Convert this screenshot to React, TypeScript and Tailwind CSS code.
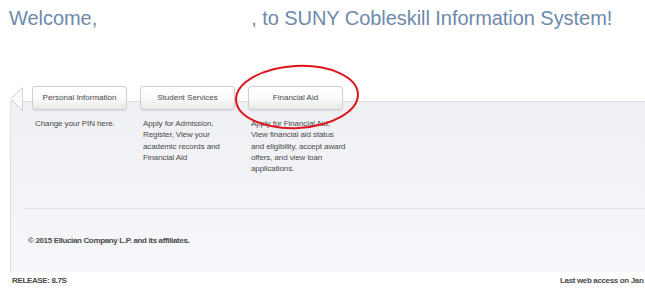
const tabs = [
  { label: "Personal Information", desc: ["Change your PIN here."] },
  {
    label: "Student Services",
    desc: ["Apply for Admission,", "Register, View your", "academic records and", "Financial Aid"],
  },
  {
    label: "Financial Aid",
    desc: [
      "Apply for Financial Aid,",
      "View financial aid status",
      "and eligibility, accept award",
      "offers, and view loan",
      "applications.",
    ],
  },
];

export default function App() {
  return (
    <div className="relative w-[645px] h-[295px] overflow-hidden bg-white font-['Liberation_Sans',Arial,sans-serif]">
      {/* header */}
      <div className="h-[85px] pl-[9px] pt-[6px]">
        <h1 className="text-[20px] leading-[24px] text-[#6d89ab] whitespace-nowrap tracking-[-0.05px]">
          Welcome,<span className="inline-block w-[154px]" />, to SUNY Cobleskill Information System!
        </h1>
      </div>

      {/* spacer so panel top lands at 101 */}
      <div className="h-[16px]" />

      {/* main panel */}
      <div className="ml-[10px] h-[171px] border-l border-t border-[#dcdee4] bg-gradient-to-b from-[#eff0f4] to-[#f6f7fa]">
        <div className="-mt-[16px] h-[122px] flex items-start">
          <svg width="13" height="24" viewBox="0 0 13 24" className="-ml-[1px] mt-[1px] shrink-0">
            <path d="M12.5 0.5 L0.5 12 L12.5 23.5 Z" fill="#fafafa" stroke="#cfd1d6" strokeWidth="1" />
          </svg>
          <div className="ml-[9px] flex">
            {tabs.map((t) => (
              <div key={t.label} className="w-[108px] shrink-0">
                <div className="w-[95px] h-[24px] rounded-[3px] border border-[#cfcfcf] bg-gradient-to-b from-white via-[#fbfbfb] to-[#e9e9e9] shadow-[0_1px_1px_rgba(0,0,0,0.08)] flex items-center justify-center text-[8px] text-[#484848]">
                  {t.label}
                </div>
                <div className="mt-[8px] pl-[3px] text-[8px] leading-[11.3px] text-[#4a4a4a] tracking-[-0.1px]">
                  {t.desc.map((l) => (
                    <div key={l} className="whitespace-nowrap">{l}</div>
                  ))}
                </div>
              </div>
            ))}
          </div>
        </div>
        <div className="ml-[12px] border-t border-[#e0e1e6]" />
        <p className="mt-[27px] ml-[17px] text-[8px] leading-[10px] font-bold text-[#4b4b4b] tracking-[-0.35px]">
          © 2015 Ellucian Company L.P. and its affiliates.
        </p>
      </div>

      {/* bottom bar */}
      <div className="flex pl-[12px] pt-[4px] text-[8px] leading-[10px] font-bold text-[#4b4b4b] tracking-[-0.35px] whitespace-nowrap">
        <span className="w-[548px] shrink-0">RELEASE: 8.7S</span>
        <span className="shrink-0">Last web access on Jan</span>
      </div>

      {/* red annotation circle */}
      <svg
        className="absolute left-[233px] top-[63px] pointer-events-none"
        width="128"
        height="68"
        viewBox="0 0 128 68"
      >
        <ellipse cx="64" cy="34" rx="61" ry="31" fill="none" stroke="#e0141b" strokeWidth="2" transform="rotate(-3 64 34)" />
      </svg>
    </div>
  );
}
